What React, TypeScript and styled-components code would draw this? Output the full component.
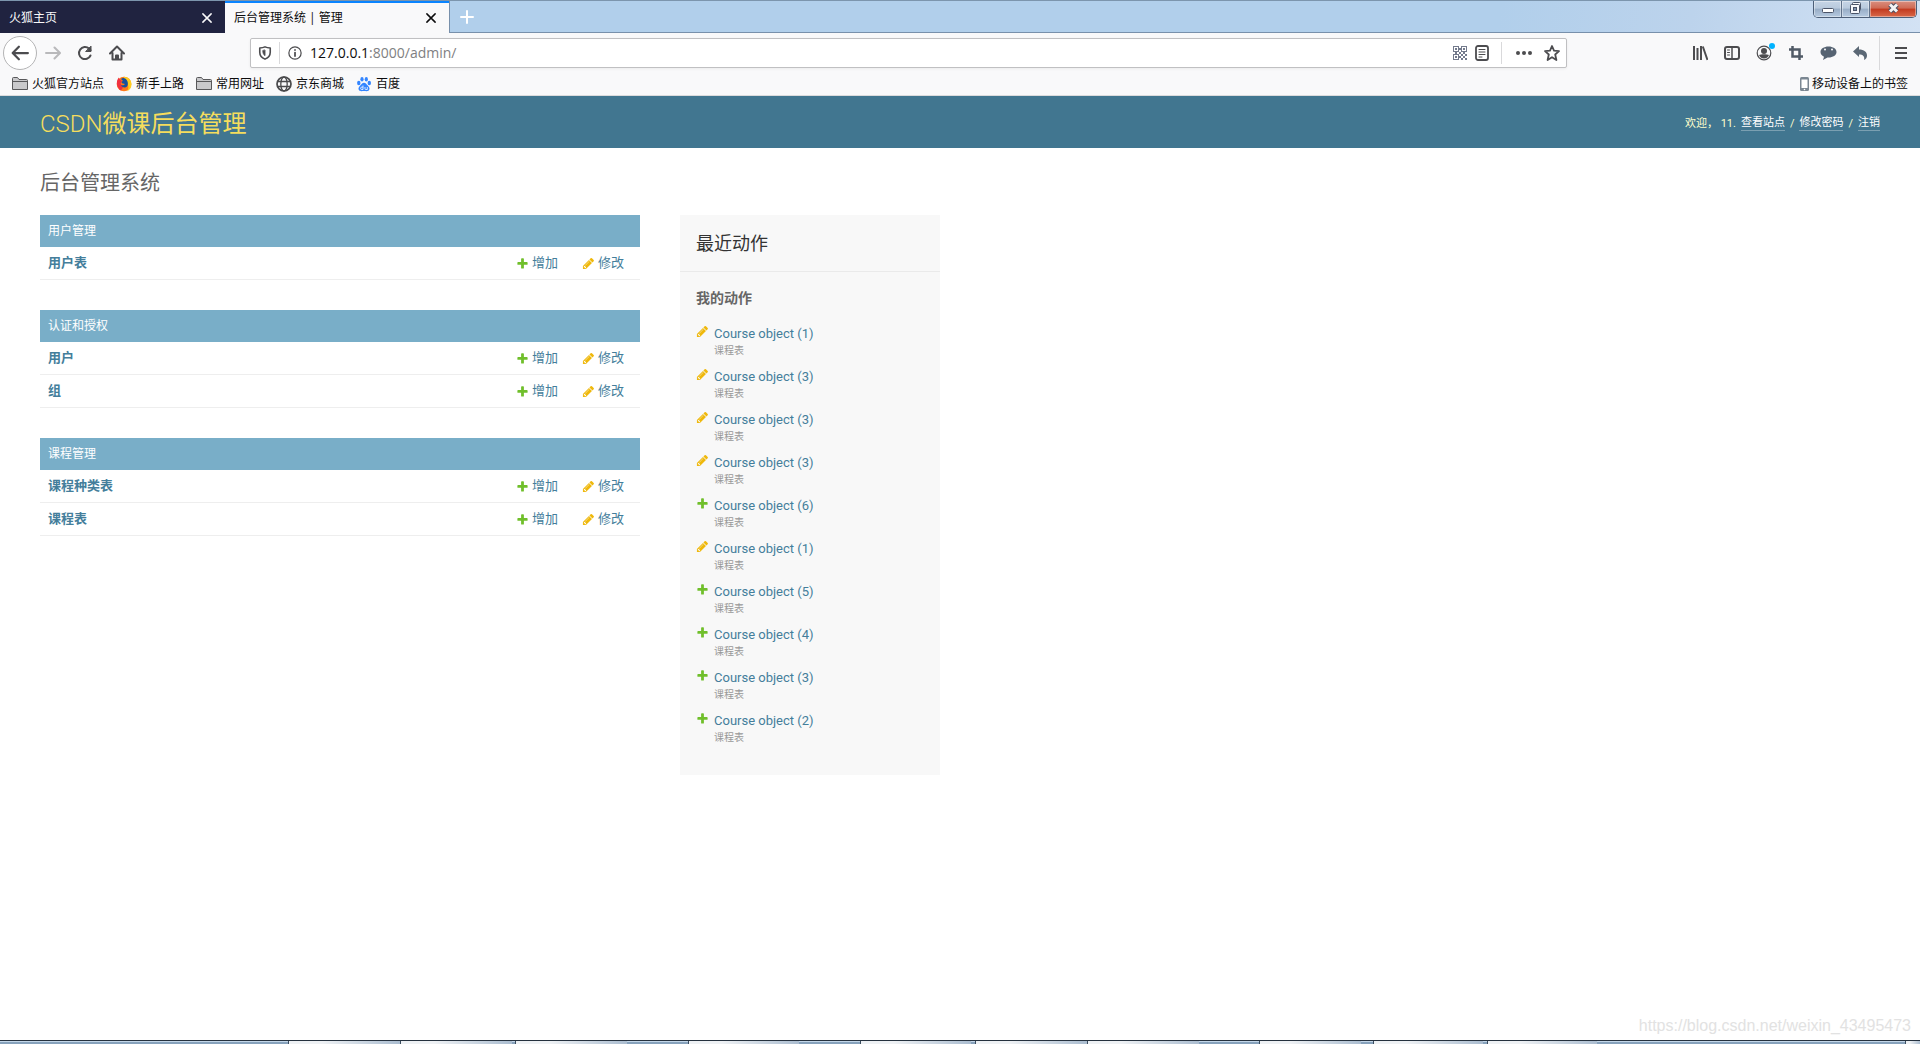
import React from "react";
import styled, { createGlobalStyle } from "styled-components";

const uiFont = '"Open Sans", "Noto Sans CJK SC", sans-serif';
const pageFont = 'Roboto, "Noto Sans CJK SC", sans-serif';

const GlobalStyle = createGlobalStyle`
  *, *::before, *::after { box-sizing: border-box; }
  body { margin: 0; background: #fff; }
  button { border: 0; padding: 0; margin: 0; background: none; font: inherit; color: inherit; cursor: pointer; }
  h1, h2, h3, p, ul { margin: 0; padding: 0; }
  ul { list-style: none; }
  svg { display: block; flex: none; }
`;

const Shell = styled.div`
  display: flex;
  flex-direction: column;
  min-height: 100vh;
  font-family: ${pageFont};
`;

/* ---------- browser chrome ---------- */

const TabStrip = styled.div`
  display: flex;
  align-items: flex-start;
  height: 33px;
  background: linear-gradient(100deg, #b1cfeb 78%, #bcd3ec 88%, #d3e2f4 100%);
  border-top: 1px solid #7c95ad;
  border-bottom: 1px solid #7890ab;
  font-family: ${uiFont};
`;

const Tab = styled.div<{ $active?: boolean }>`
  display: flex;
  align-items: center;
  justify-content: space-between;
  width: ${(p) => (p.$active ? "224px" : "225px")};
  height: 32px;
  padding: 0 12px 0 9px;
  font-size: 12px;
  color: ${(p) => (p.$active ? "#0c0c0d" : "#f9f9fa")};
  background: ${(p) => (p.$active ? "#f9f9fa" : "#202340")};
  border-top: 2px solid ${(p) => (p.$active ? "#0a84ff" : "#202340")};
`;

const TabLabel = styled.button`
  flex: 1;
  text-align: left;
  line-height: 30px;
`;

const NewTab = styled.button`
  display: grid;
  place-items: center;
  width: 34px;
  height: 31px;
  color: #fff;
  border-left: 1px solid #7890ab;
`;

const WindowButtons = styled.div`
  display: flex;
  margin-left: auto;
  margin-right: 3px;
  height: 17px;
  border: 1px solid #4d5f78;
  border-top: 0;
  border-radius: 0 0 5px 5px;
  overflow: hidden;
`;

const WindowButton = styled.button<{ $close?: boolean }>`
  display: grid;
  place-items: center;
  width: ${(p) => (p.$close ? "46px" : "28px")};
  height: 14px;
  border-right: ${(p) => (p.$close ? "0" : "1px solid #61738b")};
  box-shadow: inset 0 0 0 1px rgba(255, 255, 255, 0.4);
  height: 16px;
  padding-bottom: 2px;
  background: ${(p) =>
    p.$close
      ? "linear-gradient(#d98f80 0, #cf6a54 45%, #c23a1f 50%, #d9694a 100%)"
      : "linear-gradient(#c6d5e6 0, #b9cadd 45%, #98adc6 50%, #b6cae0 100%)"};
`;

const NavBar = styled.div`
  display: flex;
  align-items: center;
  height: 39px;
  padding: 0 3px 0 1px;
  background: #f9f9fa;
  color: #4c4c4f;
`;

const ToolButton = styled.button<{ $dim?: boolean }>`
  display: grid;
  place-items: center;
  flex: none;
  width: 32px;
  height: 34px;
  color: ${(p) => (p.$dim ? "#b9b9bb" : "inherit")};
`;

const ToolDivider = styled.span`
  flex: none;
  width: 1px;
  height: 34px;
  margin: 0 5px 0 3px;
  background: #d9d9db;
`;

const BackButton = styled.button`
  display: grid;
  place-items: center;
  flex: none;
  width: 34px;
  height: 34px;
  margin-left: 2px;
  border: 1px solid #b4b4b5;
  border-radius: 50%;
  background: #fff;
`;

const Spring = styled.div`
  flex: 1 1 0;
  max-width: 117px;
`;

const UrlBar = styled.div`
  display: flex;
  align-items: center;
  flex: 11 1 0;
  height: 30px;
  background: #fff;
  border: 1px solid #c0c0c2;
  border-radius: 2px;
  box-shadow: 0 1px 3px rgba(0, 0, 0, 0.06);
  font-family: ${uiFont};
  font-size: 14px;
`;

const UrlIcon = styled.button<{ $w?: number }>`
  display: grid;
  place-items: center;
  width: ${(p) => p.$w ?? 28}px;
  height: 28px;
`;

const Divider = styled.span<{ $gap?: number }>`
  flex: none;
  width: 1px;
  height: 22px;
  margin: 0 ${(p) => p.$gap ?? 0}px;
  background: #d9d9db;
`;

const Host = styled.label`
  color: #0c0c0d;
`;

const UrlInput = styled.input`
  flex: 1;
  min-width: 0;
  height: 28px;
  padding: 0;
  border: 0;
  outline: 0;
  background: transparent;
  font: inherit;
  color: #808082;
`;

const BookmarkBar = styled.nav`
  display: flex;
  align-items: center;
  gap: 12px;
  height: 24px;
  padding: 0 12px;
  background: #f9f9fa;
  border-bottom: 1px solid #dcdcdd;
  font-family: ${uiFont};
  font-size: 12px;
  line-height: 16px;
  color: #0c0c0d;
`;

const Bookmark = styled.button<{ $end?: boolean }>`
  display: flex;
  align-items: center;
  gap: ${(p) => (p.$end ? "2px" : "4px")};
  margin-left: ${(p) => (p.$end ? "auto" : "0")};
  white-space: nowrap;
`;

/* ---------- admin page ---------- */

const Header = styled.header`
  display: flex;
  align-items: center;
  justify-content: space-between;
  height: 52px;
  padding: 3px 40px 0;
  background: #417690;
  color: #ffffcc;
`;

const SiteName = styled.h1`
  font-size: 24px;
  font-weight: 400;
  line-height: 32px;
  color: #f5dd5d;
`;

const LightText = styled.span`
  font-weight: 300;
`;

const UserTools = styled.div`
  display: flex;
  align-items: center;
  gap: 5px;
  font-size: 11px;
  line-height: 14px;
`;

const UserLink = styled.a`
  color: #fff;
  text-decoration: none;
  border-bottom: 1px solid rgba(255, 255, 255, 0.3);
`;

const Main = styled.main`
  display: flex;
  flex-direction: column;
  flex: 1;
  padding: 21px 40px 0;
`;

const PageTitle = styled.h2`
  margin-bottom: 18px;
  font-size: 20px;
  font-weight: 400;
  line-height: 28px;
  color: #666;
`;

const Columns = styled.div`
  display: flex;
  align-items: flex-start;
  gap: 40px;
`;

const Apps = styled.div`
  display: flex;
  flex-direction: column;
  gap: 30px;
  width: 600px;
`;

const AppTable = styled.table`
  width: 100%;
  border-spacing: 0;
  table-layout: fixed;
  font-size: 13px;
  line-height: 16px;
`;

const Caption = styled.caption`
  padding: 8px;
  background: #79aec8;
  color: #fff;
  font-size: 12px;
  line-height: 16px;
  text-align: left;
`;

const Model = styled.th`
  height: 33px;
  padding: 0 8px;
  border-bottom: 1px solid #eee;
  text-align: left;
  font-weight: 700;
`;

const Action = styled.td`
  width: 66px;
  padding: 0 0 0 8px;
  border-bottom: 1px solid #eee;
`;

const PageLink = styled.a`
  display: inline-flex;
  align-items: center;
  gap: 3px;
  color: #447e9b;
  text-decoration: none;
  vertical-align: middle;
`;

const Sidebar = styled.aside`
  width: 260px;
  padding-bottom: 29px;
  background: #f8f8f8;
`;

const SideTitle = styled.h2`
  padding: 17px 16px 15px;
  border-bottom: 1px solid #eaeaea;
  font-size: 18px;
  font-weight: 400;
  line-height: 24px;
  color: #333;
`;

const SideSubtitle = styled.h3`
  padding: 16px 16px 17px;
  font-size: 14px;
  font-weight: 700;
  line-height: 20px;
  color: #666;
`;

const ActionList = styled.ul`
  display: grid;
  gap: 9px;
  padding: 0 16px;
`;

const ActionItem = styled.li`
  display: grid;
  grid-template-columns: 13px 1fr;
  column-gap: 5px;
  font-size: 13px;
  line-height: 18px;
`;

const Kind = styled.span`
  grid-column: 2;
  font-size: 10px;
  line-height: 16px;
  color: #999;
`;

const Watermark = styled.p`
  margin: auto -31px 3px auto;
  font-family: "Liberation Sans", Arial, sans-serif;
  font-size: 16px;
  line-height: 22px;
  color: #e2e2e2;
`;

const Taskbar = styled.footer`
  display: flex;
  height: 4px;
  border-top: 1px solid #25313e;
  background: linear-gradient(#c3d6e8 0 1px, #87a2bc 1px);
`;

const TaskSlot = styled.span<{ $w: number; $open?: boolean }>`
  flex: 0 1 ${(p) => p.$w}px;
  border-left: ${(p) => (p.$open ? "1px solid #3c4d5f" : "0")};
  background: ${(p) => (p.$open ? "linear-gradient(100deg, #eef1f4 30%, #abbdd0)" : "none")};
`;

/* ---------- icons ---------- */

const Stroke = ({ size = 16, w = 2, children }: { size?: number; w?: number; children: React.ReactNode }) => (
  <svg width={size} height={size} viewBox="0 0 16 16" fill="none" stroke="currentColor" strokeWidth={w} strokeLinecap="round" strokeLinejoin="round" aria-hidden="true">
    {children}
  </svg>
);

const Cross = () => (
  <Stroke size={12} w={2}>
    <path d="M2.500 2.500l11 11M13.500 2.500l-11 11" />
  </Stroke>
);

const AddIcon = () => (
  <svg width="13" height="13" viewBox="0 0 1792 1792" aria-hidden="true">
    <path fill="#70bf2b" d="M1600 796v192q0 40-28 68t-68 28h-416v416q0 40-28 68t-68 28h-192q-40 0-68-28t-28-68v-416h-416q-40 0-68-28t-28-68v-192q0-40 28-68t68-28h416v-416q0-40 28-68t68-28h192q40 0 68 28t28 68v416h416q40 0 68 28t28 68z" />
  </svg>
);

const ChangeIcon = () => (
  <svg width="13" height="13" viewBox="0 0 1792 1792" aria-hidden="true">
    <path fill="#efb80b" d="M491 1536l91-91-235-235-91 91v107h128v128h107zm523-928q0-22-22-22-10 0-17 7l-542 542q-7 7-7 17 0 22 22 22 10 0 17-7l542-542q7-7 7-17zm-54-192l416 416-832 832h-416v-416zm683 96q0 53-37 90l-166 166-416-416 166-165q36-38 90-38 53 0 91 38l235 234q37 39 37 91z" />
  </svg>
);

const FolderIcon = () => (
  <svg width="16" height="16" viewBox="0 0 16 16" aria-hidden="true">
    <path d="M.5 13.500V2.500q0-1 1-1h4l1.500 2h7.500q1 0 1 1v9z" fill="#c9c9cb" stroke="#58585a" />
    <path d="M1 5.500h14" stroke="#58585a" />
  </svg>
);

const FirefoxIcon = () => (
  <svg width="16" height="16" viewBox="0 0 16 16" aria-hidden="true">
    <circle cx="8" cy="8" r="7.300" fill="#ff7a1a" />
    <path d="M8 .7c4 0 7.500 3.300 7.500 7.500 0 3.500-2 6-4.500 7 2-3 2-6-1-8.300C8.500 5.200 7.500 3 8 .7z" fill="#ffce1f" />
    <path d="M.9 6.500C1 4 2 2.500 3 1.500c0 1 .3 1.500 1 2l2 1.500-1.500 2.500 2.500 4-2 3C2.500 13.300.7 10 .9 6.500z" fill="#f0303f" />
    <path d="M5 3c2-2 5-1 6.300 2s.5 6-2.300 6.500c-2 .2-3.500-.8-4-2.500 2 .7 3 .3 4-1l-3-.8C5 6.500 6 5 7 5z" fill="#17509e" />
  </svg>
);

const GlobeIcon = () => (
  <svg width="16" height="16" viewBox="0 0 16 16" fill="none" stroke="#4a4a4c" strokeWidth="1.300" aria-hidden="true">
    <circle cx="8" cy="8" r="7" strokeWidth="1.700" />
    <ellipse cx="8" cy="8" rx="3.200" ry="7" />
    <path d="M1.500 5.500h13M1.500 10.500h13" />
  </svg>
);

const BaiduIcon = () => (
  <svg width="16" height="16" viewBox="0 0 16 16" fill="#3385ff" aria-hidden="true">
    <ellipse cx="2.800" cy="7" rx="1.700" ry="2.200" />
    <ellipse cx="6" cy="3.200" rx="1.600" ry="2.300" />
    <ellipse cx="10.300" cy="3.200" rx="1.600" ry="2.300" />
    <ellipse cx="13.300" cy="7" rx="1.700" ry="2.200" />
    <path d="M8 6.700c1.800 0 2.500 1.600 4 3 1.700 1.600 2 3.300.9 4.600-1.200 1.400-3 .7-4.900.7s-3.700.7-4.900-.7C2 13 2.300 11.300 4 9.700c1.500-1.400 2.200-3 4-3z" />
    <path d="M7 9.500v4H5.800a1.200 1.200 0 010-2.400H7M9 11v1.700q0 .8.800.8h1.500V11" fill="none" stroke="#fff" strokeWidth=".8" />
  </svg>
);

const PhoneIcon = () => (
  <svg width="10" height="16" viewBox="0 0 10 16" aria-hidden="true">
    <rect x="0" y="1" width="9" height="14" rx="1.500" fill="#7b8792" />
    <rect x="1.500" y="3.500" width="6" height="8.500" fill="#fff" />
    <circle cx="4.500" cy="13.500" r=".8" fill="#fff" />
  </svg>
);

const QrIcon = () => (
  <svg width="14" height="14" viewBox="0 0 14 14" fill="#737a8c" aria-hidden="true">
    <path fillRule="evenodd" d="M0 0h6v6H0zM1 1v4h4V1zM8 0h6v6H8zM9 1v4h4V1zM0 8h6v6H0zM1 9v4h4V9z" />
    <path d="M2 2h2v2H2zM10 2h2v2h-2zM2 10h2v2H2zM6 2h2v2H6zM6 6h2v2H6zM2 6h2v2H2zM10 6h2v2h-2zM8 8h2v2H8zM12 8h2v2h-2zM10 10h2v2h-2zM8 12h2v2H8zM12 12h2v2h-2zM6 10h2v2H6z" />
  </svg>
);

/* ---------- data ---------- */

const apps = [
  { name: "用户管理", models: ["用户表"] },
  { name: "认证和授权", models: ["用户", "组"] },
  { name: "课程管理", models: ["课程种类表", "课程表"] },
];

const recent: Array<["change" | "add", number]> = [
  ["change", 1],
  ["change", 3],
  ["change", 3],
  ["change", 3],
  ["add", 6],
  ["change", 1],
  ["add", 5],
  ["add", 4],
  ["add", 3],
  ["add", 2],
];

const slots: Array<[number, boolean]> = [
  [288, false], [112, true], [112, true], [3, false], [112, true], [61, false], [111, true], [61, false],
  [111, true], [4, false], [112, true], [112, true], [60, false], [102, true], [12, false], [110, true],
  [4, false], [110, true], [308, false], [15, true],
];

/* ---------- sections ---------- */

const BrowserChrome = () => (
  <>
    <TabStrip>
      <Tab>
        <TabLabel>火狐主页</TabLabel>
        <button aria-label="关闭标签页"><Cross /></button>
      </Tab>
      <Tab $active>
        <TabLabel>后台管理系统 | 管理</TabLabel>
        <button aria-label="关闭标签页"><Cross /></button>
      </Tab>
      <NewTab aria-label="新建标签页">
        <Stroke size={16}><path d="M8 2v12M2 8h12" /></Stroke>
      </NewTab>
      <WindowButtons>
        <WindowButton aria-label="最小化">
          <svg width="12" height="12" viewBox="0 0 12 12"><rect x=".5" y="6.500" width="11" height="4" rx="1" fill="#fff" stroke="#4b5468" /></svg>
        </WindowButton>
        <WindowButton aria-label="还原">
          <svg width="13" height="13" viewBox="0 0 13 13" fill="#f6f8fb" stroke="#4b5468">
            <rect x="3.500" y=".5" width="8" height="8" rx="1" />
            <rect x="1.500" y="2.500" width="9" height="9" rx="1" />
            <rect x="4.500" y="5.500" width="3" height="3" fill="#7e93ae" />
          </svg>
        </WindowButton>
        <WindowButton $close aria-label="关闭">
          <svg width="13" height="12" viewBox="0 0 13 12" fill="none" aria-hidden="true">
            <path d="M3 2.500l7 7M10 2.500l-7 7" stroke="#4b4f60" strokeWidth="5" />
            <path d="M3 2.500l7 7M10 2.500l-7 7" stroke="#f4f4f6" strokeWidth="3" />
          </svg>
        </WindowButton>
      </WindowButtons>
    </TabStrip>

    <NavBar>
      <BackButton aria-label="后退">
        <Stroke size={18}><path d="M7 2.500L1.500 8 7 13.500M2 8h13" /></Stroke>
      </BackButton>
      <ToolButton $dim aria-label="前进">
        <Stroke><path d="M9.500 2.500L15 8l-5.500 5.500M14 8H1" /></Stroke>
      </ToolButton>
      <ToolButton aria-label="刷新">
        <Stroke><path d="M13.500 10.500A6 6 0 1 1 12 3.600l1.500 1.600" /><path d="M14 1.500v5H9z" fill="currentColor" strokeWidth="1" /></Stroke>
      </ToolButton>
      <ToolButton aria-label="主页">
        <Stroke><path d="M1 8.500l7-7 7 7M3.500 8v6.500h9V8" /><path d="M7 14v-3.500h2V14" /></Stroke>
      </ToolButton>
      <Spring />
      <UrlBar>
        <UrlIcon aria-label="跟踪保护">
          <Stroke size={14} w={1.8}><path d="M8 1c2 1 4 1.200 6 1.200V7c0 4-2.500 6.500-6 8-3.500-1.500-6-4-6-8V2.200C4 2.200 6 2 8 1z" /><path d="M8 5v6C6.500 10 5.500 8.500 5.500 5.500z" fill="currentColor" strokeWidth="1" /></Stroke>
        </UrlIcon>
        <Divider />
        <UrlIcon $w={30} aria-label="站点信息">
          <Stroke size={14} w={1.4}><circle cx="8" cy="8" r="7" /><path d="M8 7.500v4" strokeWidth="2" /><path d="M8 4.500v.1" strokeWidth="2" /></Stroke>
        </UrlIcon>
        <Host htmlFor="url">127.0.0.1</Host>
        <UrlInput id="url" defaultValue=":8000/admin/" />
        <UrlIcon $w={22} aria-label="二维码"><QrIcon /></UrlIcon>
        <UrlIcon $w={22} aria-label="阅读模式">
          <Stroke w={1.8}><rect x="2" y="1" width="12" height="14" rx="2" /><path d="M5 4.500h6M5 7h6M5 9.500h6M5 12h3" strokeWidth="1" /></Stroke>
        </UrlIcon>
        <Divider $gap={8} />
        <UrlIcon aria-label="页面操作">
          <Stroke><g fill="currentColor" stroke="none"><circle cx="2" cy="8" r="2" /><circle cx="8" cy="8" r="2" /><circle cx="14" cy="8" r="2" /></g></Stroke>
        </UrlIcon>
        <UrlIcon aria-label="收藏">
          <Stroke w={1.8}><path d="M8 1l2 4.700 5 .4-3.800 3.400L12.400 15 8 12.200 3.600 15l1.200-5.500L1 6.100l5-.4z" /></Stroke>
        </UrlIcon>
      </UrlBar>
      <Spring />
      <ToolButton aria-label="书库">
        <Stroke><g strokeLinecap="butt"><path d="M2 1v14M5.500 3v12M9 1v14M10.800 1.500L15.500 15" /></g></Stroke>
      </ToolButton>
      <ToolButton aria-label="侧栏">
        <Stroke><rect x="1" y="2" width="14" height="12" rx="2" /><path d="M8 2v12" strokeWidth="1.500" /><path d="M3.500 5h2M3.500 7.500h2M3.500 10h2" strokeWidth="1" /></Stroke>
      </ToolButton>
      <ToolButton aria-label="账户">
        <svg width="22" height="22" viewBox="0 0 22 22" aria-hidden="true">
          <circle cx="11" cy="11" r="6.800" fill="none" stroke="currentColor" strokeWidth="1.200" />
          <circle cx="11" cy="9" r="3" fill="currentColor" />
          <path d="M6 13c2-1 8-1 10 0-1 2.500-3 3.500-5 3.500S7 15.500 6 13z" fill="currentColor" />
          <circle cx="19" cy="4" r="3" fill="#00b3ff" />
        </svg>
      </ToolButton>
      <ToolButton aria-label="截图">
        <svg width="16" height="16" viewBox="0 0 16 16" fill="none" stroke="#505a66" strokeWidth="2.500" aria-hidden="true"><path d="M4.500 1v10.500H15M1 4.500h10.500V15" /></svg>
      </ToolButton>
      <ToolButton aria-label="聊天">
        <svg width="17" height="16" viewBox="0 0 17 16" fill="#566372" aria-hidden="true">
          <path d="M8.500 1.500c4.500 0 8 2.300 8 5.500s-3.500 5.500-8 5.500h-1L3 15l1-3.300C1.800 10.700.5 9 .5 7c0-3.200 3.500-5.500 8-5.500z" />
          <circle cx="5" cy="4.500" r="1" fill="#f9f9fa" /><circle cx="12" cy="4.500" r="1" fill="#f9f9fa" />
        </svg>
      </ToolButton>
      <ToolButton aria-label="撤销">
        <svg width="16" height="16" viewBox="0 0 16 16" fill="#5b6875" aria-hidden="true">
          <path d="M1 6.500L7 1v3.500c5 0 8 2.500 8 6 0 2-1 3.500-3 4.500 1-3.500-1-5.500-5-5.500V12z" />
        </svg>
      </ToolButton>
      <ToolDivider />
      <ToolButton aria-label="菜单">
        <Stroke><g strokeLinecap="butt"><path d="M2 3h12M2 8h12M2 13h12" /></g></Stroke>
      </ToolButton>
    </NavBar>

    <BookmarkBar>
      <Bookmark><FolderIcon />火狐官方站点</Bookmark>
      <Bookmark><FirefoxIcon />新手上路</Bookmark>
      <Bookmark><FolderIcon />常用网址</Bookmark>
      <Bookmark><GlobeIcon />京东商城</Bookmark>
      <Bookmark><BaiduIcon />百度</Bookmark>
      <Bookmark $end><PhoneIcon />移动设备上的书签</Bookmark>
    </BookmarkBar>
  </>
);

export default function App() {
  return (
    <Shell>
      <GlobalStyle />
      <BrowserChrome />
      <Header>
        <SiteName><LightText>CSDN</LightText>微课后台管理</SiteName>
        <UserTools>
          <span>欢迎， 11.</span>
          <UserLink href="#site">查看站点</UserLink>
          <span>/</span>
          <UserLink href="#password">修改密码</UserLink>
          <span>/</span>
          <UserLink href="#logout">注销</UserLink>
        </UserTools>
      </Header>
      <Main>
        <PageTitle>后台管理系统</PageTitle>
        <Columns>
          <Apps>
            {apps.map((app) => (
              <AppTable key={app.name}>
                <Caption>{app.name}</Caption>
                <tbody>
                  {app.models.map((model) => (
                    <tr key={model}>
                      <Model scope="row"><PageLink href="#model">{model}</PageLink></Model>
                      <Action><PageLink href="#add"><AddIcon />增加</PageLink></Action>
                      <Action><PageLink href="#change"><ChangeIcon />修改</PageLink></Action>
                    </tr>
                  ))}
                </tbody>
              </AppTable>
            ))}
          </Apps>
          <Sidebar>
            <SideTitle>最近动作</SideTitle>
            <SideSubtitle>我的动作</SideSubtitle>
            <ActionList>
              {recent.map(([kind, id], i) => (
                <ActionItem key={i}>
                  {kind === "add" ? <AddIcon /> : <ChangeIcon />}
                  <PageLink href="#object">Course object ({id})</PageLink>
                  <Kind>课程表</Kind>
                </ActionItem>
              ))}
            </ActionList>
          </Sidebar>
        </Columns>
        <Watermark>https://blog.csdn.net/weixin_43495473</Watermark>
      </Main>
      <Taskbar>
        {slots.map(([w, open], i) => (
          <TaskSlot key={i} $w={w} $open={open} />
        ))}
      </Taskbar>
    </Shell>
  );
}
